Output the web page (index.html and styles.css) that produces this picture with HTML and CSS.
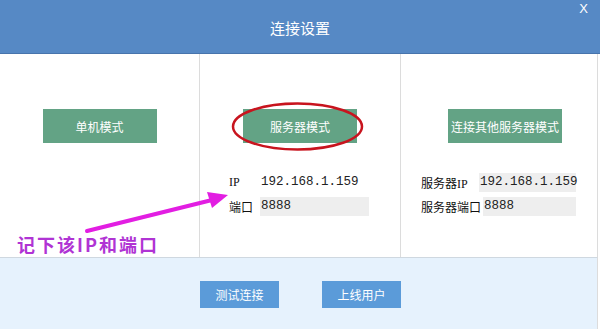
FILE: index.html
```html
<!DOCTYPE html>
<html lang="zh-CN">
<head>
    <meta charset="UTF-8">
    <meta name="viewport" content="width=device-width, initial-scale=1.0">
    <title>连接设置</title>
    <link rel="stylesheet" href="styles.css">
</head>
<body>
    <div class="dialog">
        <header class="header">
            <h1 class="title">连接设置</h1>
            <button class="close-btn">X</button>
        </header>

        <section class="panels">
            <div class="panel">
                <button class="mode-btn">单机模式</button>
            </div>

            <div class="panel panel-server">
                <button class="mode-btn">服务器模式</button>
                <div class="fields">
                    <div class="field">
                        <span class="field-label">IP</span>
                        <span class="field-value plain">192.168.1.159</span>
                    </div>
                    <div class="field">
                        <span class="field-label">端口</span>
                        <span class="field-value">8888</span>
                    </div>
                </div>
            </div>

            <div class="panel panel-remote">
                <button class="mode-btn">连接其他服务器模式</button>
                <div class="fields">
                    <div class="field">
                        <span class="field-label short">服务器IP</span>
                        <span class="field-value wide">192.168.1.159</span>
                    </div>
                    <div class="field">
                        <span class="field-label">服务器端口</span>
                        <span class="field-value">8888</span>
                    </div>
                </div>
            </div>
        </section>

        <footer class="footer">
            <button class="footer-btn">测试连接</button>
            <button class="footer-btn">上线用户</button>
        </footer>

        <!-- annotation drawn over the screenshot -->
        <svg class="markup" width="600" height="329" viewBox="0 0 600 329">
            <ellipse cx="297.5" cy="126.5" rx="64.5" ry="23" fill="none" stroke="#c8141e" stroke-width="2.5"/>
            <line x1="87" y1="231" x2="212" y2="200" stroke="#e21ee2" stroke-width="4" stroke-linecap="round"/>
            <polygon points="228,195 207,192 212,208" fill="#e21ee2"/>
        </svg>
        <div class="note">记下该IP和端口</div>
    </div>
</body>
</html>
```

FILE: styles.css
```css
:root {
    --header-bg: #5689c5;
    --mode-green: #63a385;
    --footer-bg: #e6f2fd;
    --footer-btn: #5b9bd9;
    --field-bg: #eeeeee;
    --divider: #dcdcdc;
}

* {
    box-sizing: border-box;
    margin: 0;
    padding: 0;
}

body {
    font-family: "Noto Sans CJK SC", "Liberation Sans", sans-serif;
    background-color: #ffffff;
    color: #222222;
}

button {
    font-family: inherit;
    border: none;
    cursor: pointer;
}

.dialog {
    position: relative;
    width: 600px;
    height: 329px;
    display: flex;
    flex-direction: column;
}

.header {
    position: relative;
    height: 54px;
    background-color: var(--header-bg);
    border-bottom: 1px solid #4774ac;
    display: flex;
    align-items: center;
    justify-content: center;
}

.title {
    font-size: 15px;
    font-weight: 400;
    color: #ffffff;
    padding-top: 2px;
}

.close-btn {
    position: absolute;
    top: 1px;
    right: 12px;
    background: none;
    color: #ffffff;
    font-family: "Liberation Sans", sans-serif;
    font-size: 13px;
}

.panels {
    height: 203px;
    display: grid;
    grid-template-columns: 200px 201px 196px;
    border-right: 1px solid var(--divider);
    width: 598px;
}

.panel {
    display: flex;
    flex-direction: column;
    align-items: center;
    padding-top: 55px;
    border-right: 1px solid var(--divider);
}

.panel-remote {
    border-right: none;
    padding-left: 12px;
}

.mode-btn {
    width: 114px;
    height: 34px;
    background-color: var(--mode-green);
    color: #ffffff;
    font-size: 12px;
    white-space: nowrap;
}

.fields {
    display: flex;
    flex-direction: column;
    gap: 5px;
    margin-top: 30px;
    align-self: stretch;
}

.panel-server .fields {
    padding-left: 29px;
}

.panel-remote .fields {
    padding-left: 8px;
}

.field {
    display: flex;
    align-items: center;
    height: 19px;
}

.field-label {
    font-family: "Liberation Serif", "Noto Sans CJK SC", serif;
    font-size: 12px;
    color: #111111;
    white-space: nowrap;
}

.panel-server .field-label {
    width: 31px;
}

.panel-remote .field-label {
    width: 62px;
}

.panel-remote .field-label.short {
    width: 58px;
}

.field-value {
    height: 19px;
    width: 109px;
    padding-left: 1px;
    background-color: var(--field-bg);
    font-family: "Liberation Mono", monospace;
    font-size: 12.5px;
    line-height: 18px;
    color: #222222;
}

.field-value.plain {
    background-color: transparent;
}

.panel-remote .field-value {
    width: 93px;
}

.panel-remote .field-value.wide {
    width: 97px;
}

.footer {
    flex: 1;
    background-color: var(--footer-bg);
    border-top: 1px solid #cfd8e0;
    border-right: 1px solid var(--divider);
    width: 598px;
    display: flex;
    justify-content: center;
    align-items: flex-start;
    gap: 43px;
    padding-top: 23px;
    padding-left: 4px;
}

.footer-btn {
    width: 79px;
    height: 27px;
    background-color: var(--footer-btn);
    color: #ffffff;
    font-size: 12px;
}

.markup {
    position: absolute;
    top: 0;
    left: 0;
    pointer-events: none;
}

.note {
    position: absolute;
    left: 17px;
    top: 232px;
    font-size: 18px;
    font-weight: 700;
    letter-spacing: 2px;
    color: #b034d4;
    line-height: 24px;
}
```
